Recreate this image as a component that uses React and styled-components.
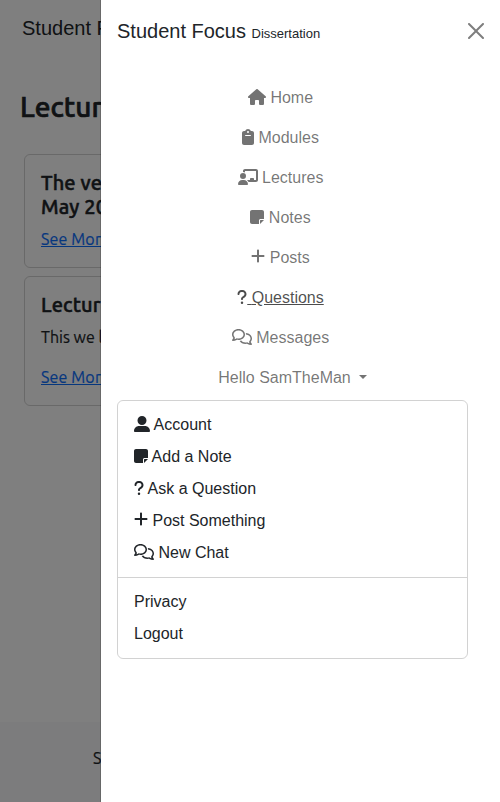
import React from "react";
import styled, { createGlobalStyle } from "styled-components";
import {
  FaHouse,
  FaClipboard,
  FaChalkboardUser,
  FaNoteSticky,
  FaPlus,
  FaQuestion,
  FaRegComments,
  FaUserLarge,
} from "react-icons/fa6";

const GlobalStyle = createGlobalStyle`
  *, *::before, *::after { box-sizing: border-box; }
  body {
    margin: 0;
    overflow: hidden;
    background: #fff;
    color: #212529;
    font: 400 16px/1.5 "Liberation Sans", Arial, sans-serif;
  }
`;

const Page = styled.div`
  display: flex;
  flex-direction: column;
  height: 802px;
  overflow: hidden;
  font-family: Ubuntu, "Noto Sans", sans-serif;
  font-weight: 400;
`;

const TopBar = styled.header`
  padding: 13px 22px;
  height: 56px;
  font: 400 20px/30px "Liberation Sans", Arial, sans-serif;
  white-space: nowrap;
`;

const Content = styled.main`
  flex: 1;
  padding: 34px 24px 0;
`;

const Heading = styled.h1`
  margin: 0 0 30px -4px;
  font-size: 28px;
  font-weight: 500;
  line-height: 34px;
  -webkit-text-stroke: 0.7px currentColor;
`;

const Card = styled.article`
  margin-bottom: 8px;
  padding: 16px;
  border: 1px solid rgba(0, 0, 0, 0.175);
  border-radius: 6px;
`;

const CardTitle = styled.h2`
  margin: 0 0 8px;
  font-size: 20px;
  font-weight: 500;
  line-height: 24px;
  letter-spacing: 0.15px;
  -webkit-text-stroke: 0.5px currentColor;
`;

const CardText = styled.p`
  margin: 0 0 16px;
  -webkit-text-stroke: 0.2px currentColor;
`;

const CardLink = styled.a`
  display: block;
  color: #0d6efd;
  letter-spacing: 0.15px;
  text-decoration: underline;
  -webkit-text-stroke: 0.2px currentColor;
`;

const Footer = styled.footer`
  height: 80px;
  padding: 24px 0 0 93px;
  background: #f8f9fa;
  -webkit-text-stroke: 0.2px currentColor;
`;

const Backdrop = styled.div`
  position: fixed;
  inset: 0;
  background: rgba(0, 0, 0, 0.5);
`;

const Drawer = styled.aside`
  position: fixed;
  top: 0;
  right: 0;
  bottom: 0;
  width: 400px;
  background: #fff;
  border-left: 1px solid rgba(0, 0, 0, 0.175);
  background-clip: padding-box;
`;

const DrawerHeader = styled.div`
  display: flex;
  align-items: flex-start;
  justify-content: space-between;
  height: 62px;
  padding: 16px 16px 0;
`;

const DrawerTitle = styled.div`
  font-size: 20px;
  line-height: 30px;
`;

const Subtitle = styled.span`
  font-size: 13px;
`;

const CloseButton = styled.button`
  display: flex;
  margin-top: 7px;
  padding: 0;
  border: 0;
  background: none;
  color: #000;
  opacity: 0.5;
`;

const DrawerBody = styled.nav`
  padding: 16px 32px 16px 16px;
`;

const NavLink = styled.a`
  display: block;
  padding: 8px ${(p) => (p.$wide ? "0" : "24px")} 8px 0;
  color: ${(p) => (p.$hovered ? "rgba(0,0,0,.7)" : "rgba(0,0,0,.55)")};
  text-align: center;
  text-decoration: ${(p) => (p.$hovered ? "underline" : "none")};
`;

const Glyph = styled.span`
  svg {
    width: ${(p) => p.$width}px;
    height: 16px;
    vertical-align: ${(p) => -2 + (p.$raise || 0)}px;
    overflow: visible;
  }
`;

const Caret = styled.span`
  display: inline-block;
  margin-left: 8px;
  vertical-align: 4px;
  border-top: 4.8px solid;
  border-right: 4.8px solid transparent;
  border-left: 4.8px solid transparent;
`;

const Menu = styled.div`
  margin-top: 2px;
  padding: 8px 0;
  border: 1px solid rgba(0, 0, 0, 0.175);
  border-radius: 6px;
`;

const MenuItem = styled.a`
  display: block;
  padding: 4px 16px;
  color: #212529;
`;

const Divider = styled.hr`
  margin: 8px 0;
  border: 0;
  border-top: 1px solid rgba(0, 0, 0, 0.175);
`;

const links = [
  { Icon: FaHouse, width: 18, label: "Home" },
  { Icon: FaClipboard, width: 12, label: "Modules" },
  { Icon: FaChalkboardUser, width: 20, label: "Lectures" },
  { Icon: FaNoteSticky, width: 14, label: "Notes" },
  { Icon: FaPlus, width: 14, raise: 1, label: "Posts" },
  { Icon: FaQuestion, width: 10, label: "Questions", hovered: true },
  { Icon: FaRegComments, width: 20, label: "Messages" },
];

const actions = [
  { Icon: FaUserLarge, width: 16, label: "Account" },
  { Icon: FaNoteSticky, width: 14, label: "Add a Note" },
  { Icon: FaQuestion, width: 10, label: "Ask a Question" },
  { Icon: FaPlus, width: 14, raise: 1, label: "Post Something" },
  { Icon: FaRegComments, width: 20, label: "New Chat" },
];

export default function App() {
  return (
    <>
      <GlobalStyle />
      <Page>
        <TopBar>Student Focus</TopBar>
        <Content>
          <Heading>Lectures</Heading>
          <Card>
            <CardTitle>
              The ve
              <br />
              May 20
            </CardTitle>
            <CardLink>See More</CardLink>
          </Card>
          <Card>
            <CardTitle>Lecture</CardTitle>
            <CardText>This we l</CardText>
            <CardLink>See More</CardLink>
          </Card>
        </Content>
        <Footer>S</Footer>
      </Page>
      <Backdrop />
      <Drawer>
        <DrawerHeader>
          <DrawerTitle>
            Student Focus <Subtitle>Dissertation</Subtitle>
          </DrawerTitle>
          <CloseButton aria-label="Close">
            <svg width="16" height="16" viewBox="0 0 16 16" fill="currentColor">
              <path d="M.293.293a1 1 0 0 1 1.414 0L8 6.586 14.293.293a1 1 0 1 1 1.414 1.414L9.414 8l6.293 6.293a1 1 0 0 1-1.414 1.414L8 9.414l-6.293 6.293a1 1 0 0 1-1.414-1.414L6.586 8 .293 1.707a1 1 0 0 1 0-1.414z" />
            </svg>
          </CloseButton>
        </DrawerHeader>
        <DrawerBody>
          {links.map(({ Icon, width, raise, label, hovered }) => (
            <NavLink key={label} $hovered={hovered}>
              <Glyph $width={width} $raise={raise}>
                <Icon />
              </Glyph>{" "}
              {label}
            </NavLink>
          ))}
          <NavLink $wide>
            Hello SamTheMan
            <Caret />
          </NavLink>
          <Menu>
            {actions.map(({ Icon, width, raise, label }) => (
              <MenuItem key={label}>
                <Glyph $width={width} $raise={raise}>
                  <Icon />
                </Glyph>{" "}
                {label}
              </MenuItem>
            ))}
            <Divider />
            <MenuItem>Privacy</MenuItem>
            <MenuItem>Logout</MenuItem>
          </Menu>
        </DrawerBody>
      </Drawer>
    </>
  );
}
